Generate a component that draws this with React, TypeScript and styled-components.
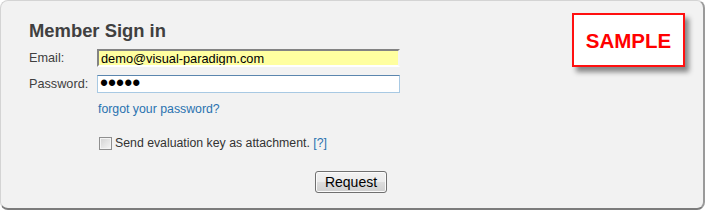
import { createGlobalStyle, styled } from "styled-components"

const GlobalStyle = createGlobalStyle`
    html, body {
        margin: 0;
        padding: 0;
        background: #ffffff;
        font-family: "Liberation Sans", Arial, sans-serif;
    }
`

const Panel = styled.div`
    position: relative;
    box-sizing: border-box;
    width: 705px;
    height: 210px;
    padding: 19px 0 0 28px;
    background: #f2f2f2;
    border: 1px solid #d4d4d4;
    border-right: 2px solid #9a9a9a;
    border-bottom: 2px solid #7c7c7c;
    border-radius: 8px;
    display: flex;
    flex-direction: column;
`

const Title = styled.h2`
    margin: 0;
    font-size: 18.4px;
    line-height: 22px;
    font-weight: bold;
    color: #404040;
`

const Form = styled.div`
    margin-top: 7px;
    display: flex;
    flex-direction: column;
    gap: 8px;
`

const Row = styled.div`
    display: flex;
    align-items: center;
    height: 18px;
`

const Label = styled.label`
    width: 68px;
    font-size: 12.7px;
    color: #404040;
`

const Field = styled.input<{ $variant: "filled" | "focus" }>`
    box-sizing: border-box;
    width: 303px;
    height: 18px;
    margin: 0;
    padding: 0 2px;
    outline: none;
    font-family: "Liberation Sans", Arial, sans-serif;
    font-size: 12.8px;
    color: #000;
    ${({ $variant }) =>
        $variant === "filled"
            ? `
        background: #ffffa0;
        border-style: solid;
        border-width: 2px;
        border-color: #838383 #f4f4f4 #ffffff #838383;
    `
            : `
        background: #ffffff;
        border: 1px solid #a8c9e3;
        border-top-color: #5b86ae;
        font-size: 23px;
        padding: 0 2px 1px 2px;
        letter-spacing: 0px;
    `}
`

const Indented = styled.div<{ $mt: number }>`
    margin-left: 69px;
    margin-top: ${({ $mt }) => $mt}px;
    display: flex;
    align-items: center;
    font-size: 12.3px;
    line-height: 16px;
    color: #333;
`

const Link = styled.a`
    color: #2a72b0;
    text-decoration: none;
    cursor: pointer;
`

const Check = styled.input`
    appearance: none;
    box-sizing: border-box;
    width: 13px;
    height: 13px;
    margin: 0 3px 0 1px;
    border: 1px solid #8f8f8f;
    box-shadow: inset 0 0 0 1px #f4f4f4;
    background: linear-gradient(135deg, #d2d2d2 0%, #f6f6f6 100%);
`

const Actions = styled.div`
    margin-top: 20px;
    display: flex;
    justify-content: center;
    padding-right: 30px;
`

const Button = styled.button`
    box-sizing: border-box;
    width: 72px;
    height: 22px;
    padding: 0;
    border: 1px solid #707070;
    border-radius: 3px;
    box-shadow: inset 0 0 0 1px #fbfbfb;
    background: linear-gradient(to bottom, #f2f2f2 0%, #ebebeb 50%, #dddddd 51%, #cfcfcf 100%);
    font-family: "Liberation Sans", Arial, sans-serif;
    font-size: 14px;
    color: #000;
`

const Stamp = styled.div`
    position: absolute;
    top: 12px;
    right: 18px;
    box-sizing: border-box;
    width: 113px;
    height: 54px;
    background: #ffffff;
    border: 2px solid #ff1010;
    box-shadow: 4px 5px 5px rgba(0, 0, 0, 0.45);
    display: flex;
    align-items: center;
    justify-content: center;
    font-size: 20.5px;
    font-weight: bold;
    color: #ff0000;
    padding-top: 2px;
`

export default function App() {
    return (
        <>
            <GlobalStyle />
            <Panel>
                <Title>Member Sign in</Title>
                <Form>
                    <Row>
                        <Label>Email:</Label>
                        <Field $variant="filled" type="text" defaultValue="demo@visual-paradigm.com" />
                    </Row>
                    <Row>
                        <Label>Password:</Label>
                        <Field $variant="focus" type="password" defaultValue="12345" />
                    </Row>
                </Form>
                <Indented $mt={8}>
                    <Link>forgot your password?</Link>
                </Indented>
                <Indented $mt={18}>
                    <Check type="checkbox" />
                    <span>
                        Send evaluation key as attachment. <Link>[?]</Link>
                    </span>
                </Indented>
                <Actions>
                    <Button>Request</Button>
                </Actions>
                <Stamp>SAMPLE</Stamp>
            </Panel>
        </>
    )
}
